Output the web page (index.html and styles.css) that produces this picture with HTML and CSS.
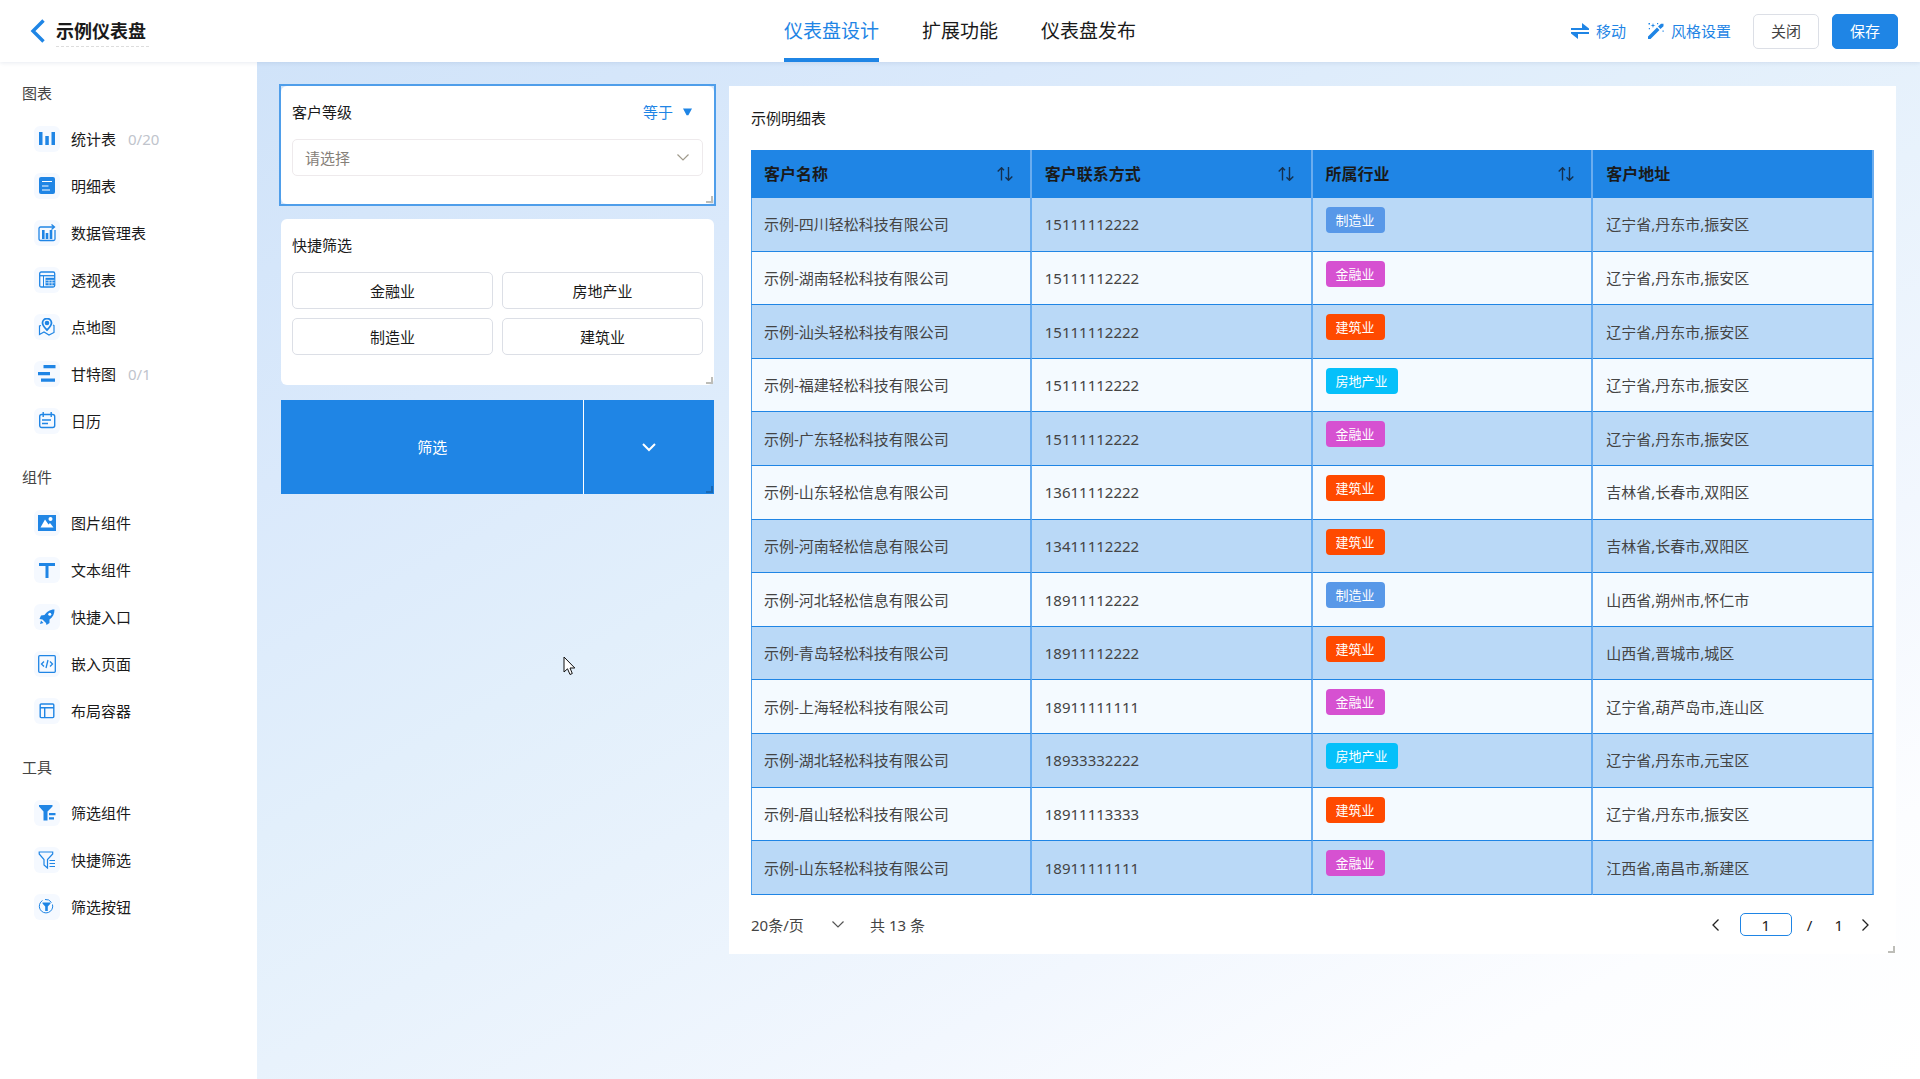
FILE: index.html
```html
<!DOCTYPE html>
<html lang="zh-CN">
<head>
<meta charset="utf-8">
<title>示例仪表盘</title>
<link rel="stylesheet" href="styles.css">
</head>
<body>
<header class="topbar">
  <div class="brand">
    <button class="icon-button" type="button" aria-label="返回">
      <svg width="16" height="24" viewBox="0 0 16 24" fill="none" stroke="#1f85e5" stroke-width="3.4"><path d="M13.5 1.5 3 12l10.500 10.500"/></svg>
    </button>
    <h1 class="brand-title">示例仪表盘</h1>
  </div>
  <nav class="tabs">
    <a class="tab tab-active" href="#design">仪表盘设计</a>
    <a class="tab" href="#extend">扩展功能</a>
    <a class="tab" href="#publish">仪表盘发布</a>
  </nav>
  <div class="actions">
    <button class="text-button" type="button">
      <svg width="18" height="16" viewBox="0 0 18 16" fill="#1f85e5"><path d="M0 5h11V0l7 5.500V7H0zM18 11H7v5L0 10.500V9h18z"/></svg>
      移动
    </button>
    <button class="text-button" type="button">
      <svg width="16" height="16" viewBox="0 0 16 16" fill="#1f85e5"><path d="M0 13.500 9 4.500l2.500 2.500-9 9H0zM10 3.500 13 .8h2.500v2.500L12.500 6zM5 0l.6 1.900L7.500 2.500l-1.900.6L5 5l-.6-1.900L2.500 2.500l1.900-.6zM.5 0h1.500v1.500H.5zM9 0h1.200v1.200H9zM.8 5H2v1.200H.8zM14.500 7.500h1.200v1.200h-1.200z"/></svg>
      风格设置
    </button>
    <button class="button" type="button">关闭</button>
    <button class="button button-primary" type="button">保存</button>
  </div>
</header>
<div class="workspace">
  <aside class="sidebar">
    <section class="group">
      <h2 class="group-title">图表</h2>
      <ul class="group-list">
        <li class="tool"><span class="tool-icon"><svg width="18" height="18" viewBox="0 0 18 18" fill="#1f85e5"><path d="M1 2h3.500v13H1zM7.300 6h3.500v9H7.300zM13.500 2H17v13h-3.500z"/></svg></span>统计表<span class="quota">0/20</span></li>
        <li class="tool"><span class="tool-icon"><svg width="18" height="18" viewBox="0 0 18 18"><rect x="1" y="0" width="16" height="17" rx="2" fill="#1f85e5"/><path d="M4 4.500h10M4 9h6.500M4 13h8" stroke="#fff" stroke-width="1.200"/></svg></span>明细表</li>
        <li class="tool"><span class="tool-icon"><svg width="18" height="18" viewBox="0 0 18 18" fill="none" stroke="#1f85e5"><path d="M17 6v9a1.500 1.500 0 0 1-1.500 1.500h-13A1.500 1.500 0 0 1 1 15V4.500A1.500 1.500 0 0 1 2.500 3H16M13.500.5 16.500 3l-3 2.500" stroke-width="1.300"/><path d="M5.300 6v9M9 9v6M13 6v9" stroke-width="2.600"/></svg></span>数据管理表</li>
        <li class="tool"><span class="tool-icon"><svg width="18" height="18" viewBox="0 0 18 18" fill="none" stroke="#1f85e5"><rect x="1.700" y="1" width="15" height="15" rx="1.500" stroke-width="1.300"/><path d="M2 4.700h14.500" stroke-width="1.300"/><path d="M5.500 5v11"/><rect x="7.500" y="6.800" width="9" height="7.500" fill="#1f85e5" stroke="none"/><path d="M7.500 9.300h9M7.500 11.800h9M11 9v5.500M14 9v5.500" stroke="#f5f9ff" stroke-width=".7"/></svg></span>透视表</li>
        <li class="tool"><span class="tool-icon"><svg width="18" height="18" viewBox="0 0 18 18" fill="none" stroke="#1f85e5"><path d="M9 12C6 9 4.500 7.300 4.500 5a4.500 4.500 0 0 1 9 0C13.500 7.300 12 9 9 12z" stroke-width="1.800"/><circle cx="9" cy="5" r="2.300" fill="#1f85e5" stroke="none"/><path d="M3 7.500 1.500 8v8.500L6 14l5 3 5-2.500V7.500l-1-.5" stroke-width="1.200"/></svg></span>点地图</li>
        <li class="tool"><span class="tool-icon"><svg width="18" height="18" viewBox="0 0 18 18" fill="#1f85e5"><path d="M5.500 0h12v3.200h-12zM0 7h12v3.200H0zM3 13.500h14v3.200H3z"/></svg></span>甘特图<span class="quota">0/1</span></li>
        <li class="tool"><span class="tool-icon"><svg width="18" height="18" viewBox="0 0 18 18" fill="none" stroke="#1f85e5" stroke-width="1.400"><rect x="1.700" y="2.500" width="15" height="13" rx="2"/><path d="M5.200 0v5M13.200 0v5M4 8h9M4 11.500h6"/></svg></span>日历</li>
      </ul>
    </section>
    <section class="group">
      <h2 class="group-title">组件</h2>
      <ul class="group-list">
        <li class="tool"><span class="tool-icon"><svg width="18" height="18" viewBox="0 0 18 18"><path d="M0 1h18v16H0z" fill="#1f85e5"/><path d="m2.500 13.500 4.500-8 3.500 5L12 9l3.500 4.500z" fill="#fff"/><circle cx="12.500" cy="5" r="2" fill="#fff"/></svg></span>图片组件</li>
        <li class="tool"><span class="tool-icon"><svg width="18" height="18" viewBox="0 0 18 18" fill="#1f85e5"><path d="M1 2h16v3h-6.500v12h-3V5H1z"/></svg></span>文本组件</li>
        <li class="tool"><span class="tool-icon"><svg width="18" height="18" viewBox="0 0 18 18"><path d="M16.500 1.500C11.500 1.500 8.500 4 6.500 7L3 7.500 1.500 11l3 .5L8 15l.5 2 3-2v-3.500c3.500-2.500 5-5.500 5-10zM3 12.500l2.500 2.500L2 16z" fill="#1f85e5"/><circle cx="11.800" cy="6.200" r="1.500" fill="#fff"/></svg></span>快捷入口</li>
        <li class="tool"><span class="tool-icon"><svg width="18" height="18" viewBox="0 0 18 18" fill="none" stroke="#1f85e5" stroke-width="1.300"><rect x=".7" y=".7" width="16.600" height="16.600" rx="1"/><path d="M6 6.500 3.500 9 6 11.500M12 6.500 14.500 9 12 11.500M10 5 8 13"/></svg></span>嵌入页面</li>
        <li class="tool"><span class="tool-icon"><svg width="18" height="18" viewBox="0 0 18 18" fill="none" stroke="#1f85e5" stroke-width="1.400"><rect x="2.200" y="2" width="13.600" height="13.600" rx="1"/><path d="M2 5.700h14M6.700 5.700v10"/></svg></span>布局容器</li>
      </ul>
    </section>
    <section class="group">
      <h2 class="group-title">工具</h2>
      <ul class="group-list">
        <li class="tool"><span class="tool-icon"><svg width="18" height="18" viewBox="0 0 18 18" fill="#1f85e5"><path d="M1 1h13.500v1.500L9.500 7.500v9h-4v-9L1 2.500zM11 9h6.500v2.200H11zM11 13.300h5v2.200h-5z"/></svg></span>筛选组件</li>
        <li class="tool"><span class="tool-icon"><svg width="18" height="18" viewBox="0 0 18 18" fill="none" stroke="#1f85e5" stroke-width="1.200"><path d="M9.500 17 6 14V8.500L1.200 3V1h13.500v2L9.500 8.500z"/><path d="M11.500 9.500h5.500M11.500 12.500h5.500M11.500 15.500h5.500"/></svg></span>快捷筛选</li>
        <li class="tool"><span class="tool-icon"><svg width="18" height="18" viewBox="0 0 18 18" fill="none" stroke="#1f85e5"><path d="M4.500 2.500a6.700 6.700 0 1 0 10 4M7 1.500a6.700 6.700 0 0 1 6.500 3" stroke-width="1"/><path d="M4.500 4.500h8v1L9.800 8.500V13H7.200V8.500L4.500 5.500z" fill="#1f85e5" stroke="none"/></svg></span>筛选按钮</li>
      </ul>
    </section>
  </aside>
  <main class="canvas">
    <div class="column">
      <section class="card card-selected">
        <div class="card-head">
          <label class="card-title" for="level">客户等级</label>
          <span class="operator">
            <select class="operator-select" aria-label="条件"><option>等于</option></select>
            <svg width="9" height="8" viewBox="0 0 10 8" fill="#1f85e5"><path d="M0 0h10L6 7.500H4z"/></svg>
          </span>
        </div>
        <div class="field">
          <select class="field-select" id="level"><option>请选择</option></select>
          <svg width="12" height="7" viewBox="0 0 12 7" fill="none" stroke="#a09a8c" stroke-width="1.200"><path d="m.5.5 5.500 5.500L11.500.5"/></svg>
        </div>
        <span class="resize"></span>
      </section>
      <section class="card">
        <h2 class="card-title">快捷筛选</h2>
        <div class="choices">
          <button class="choice" type="button">金融业</button>
          <button class="choice" type="button">房地产业</button>
          <button class="choice" type="button">制造业</button>
          <button class="choice" type="button">建筑业</button>
        </div>
        <span class="resize"></span>
      </section>
      <div class="split">
        <button class="split-main" type="button">筛选</button>
        <button class="split-more" type="button" aria-label="更多">
          <svg width="14" height="9" viewBox="0 0 14 9" fill="none" stroke="#fff" stroke-width="2"><path d="m1 1 6 6 6-6"/></svg>
        </button>
        <span class="resize resize-dark"></span>
      </div>
    </div>
    <section class="panel">
      <h2 class="card-title">示例明细表</h2>
      <table class="data">
        <thead>
          <tr>
            <th><div class="th">客户名称<svg width="16" height="14" viewBox="0 0 16 14" fill="none" stroke="#15304d" stroke-width="1.400"><path d="M.7 4.500 4.500.8v12.700M4.500.8l2.500 2.500M11.500 0v13M8.500 10.300l3 3 3.800-3.800"/></svg></div></th>
            <th><div class="th">客户联系方式<svg width="16" height="14" viewBox="0 0 16 14" fill="none" stroke="#15304d" stroke-width="1.400"><path d="M.7 4.500 4.500.8v12.700M4.500.8l2.500 2.500M11.500 0v13M8.500 10.300l3 3 3.800-3.800"/></svg></div></th>
            <th><div class="th">所属行业<svg width="16" height="14" viewBox="0 0 16 14" fill="none" stroke="#15304d" stroke-width="1.400"><path d="M.7 4.500 4.500.8v12.700M4.500.8l2.500 2.500M11.500 0v13M8.500 10.300l3 3 3.800-3.800"/></svg></div></th>
            <th><div class="th">客户地址</div></th>
          </tr>
        </thead>
        <tbody>
          <tr><td>示例-四川轻松科技有限公司</td><td>15111112222</td><td class="tag-cell"><span class="tag tag-make">制造业</span></td><td>辽宁省,丹东市,振安区</td></tr>
          <tr><td>示例-湖南轻松科技有限公司</td><td>15111112222</td><td class="tag-cell"><span class="tag tag-finance">金融业</span></td><td>辽宁省,丹东市,振安区</td></tr>
          <tr><td>示例-汕头轻松科技有限公司</td><td>15111112222</td><td class="tag-cell"><span class="tag tag-build">建筑业</span></td><td>辽宁省,丹东市,振安区</td></tr>
          <tr><td>示例-福建轻松科技有限公司</td><td>15111112222</td><td class="tag-cell"><span class="tag tag-estate">房地产业</span></td><td>辽宁省,丹东市,振安区</td></tr>
          <tr><td>示例-广东轻松科技有限公司</td><td>15111112222</td><td class="tag-cell"><span class="tag tag-finance">金融业</span></td><td>辽宁省,丹东市,振安区</td></tr>
          <tr><td>示例-山东轻松信息有限公司</td><td>13611112222</td><td class="tag-cell"><span class="tag tag-build">建筑业</span></td><td>吉林省,长春市,双阳区</td></tr>
          <tr><td>示例-河南轻松信息有限公司</td><td>13411112222</td><td class="tag-cell"><span class="tag tag-build">建筑业</span></td><td>吉林省,长春市,双阳区</td></tr>
          <tr><td>示例-河北轻松信息有限公司</td><td>18911112222</td><td class="tag-cell"><span class="tag tag-make">制造业</span></td><td>山西省,朔州市,怀仁市</td></tr>
          <tr><td>示例-青岛轻松科技有限公司</td><td>18911112222</td><td class="tag-cell"><span class="tag tag-build">建筑业</span></td><td>山西省,晋城市,城区</td></tr>
          <tr><td>示例-上海轻松科技有限公司</td><td>18911111111</td><td class="tag-cell"><span class="tag tag-finance">金融业</span></td><td>辽宁省,葫芦岛市,连山区</td></tr>
          <tr><td>示例-湖北轻松科技有限公司</td><td>18933332222</td><td class="tag-cell"><span class="tag tag-estate">房地产业</span></td><td>辽宁省,丹东市,元宝区</td></tr>
          <tr><td>示例-眉山轻松科技有限公司</td><td>18911113333</td><td class="tag-cell"><span class="tag tag-build">建筑业</span></td><td>辽宁省,丹东市,振安区</td></tr>
          <tr><td>示例-山东轻松科技有限公司</td><td>18911111111</td><td class="tag-cell"><span class="tag tag-finance">金融业</span></td><td>江西省,南昌市,新建区</td></tr>
        </tbody>
      </table>
      <footer class="pager">
        <span class="page-size">
          <select class="page-size-select" aria-label="每页条数"><option>20条/页</option></select>
          <svg width="12" height="7" viewBox="0 0 12 7" fill="none" stroke="#555" stroke-width="1.200"><path d="m.5.5 5.500 5.500L11.500.5"/></svg>
        </span>
        <span class="total">共 13 条</span>
        <button class="icon-button" type="button" aria-label="上一页"><svg width="7" height="12" viewBox="0 0 7 12" fill="none" stroke="#222" stroke-width="1.300"><path d="M6.500.5 1 6l5.500 5.500"/></svg></button>
        <input class="page-input" type="text" value="1" aria-label="页码">
        <span class="page-total"><span>/</span><span>1</span></span>
        <button class="icon-button" type="button" aria-label="下一页"><svg width="7" height="12" viewBox="0 0 7 12" fill="none" stroke="#222" stroke-width="1.300"><path d="M.5.5 6 6 .5 11.500"/></svg></button>
      </footer>
      <span class="resize"></span>
    </section>
    <svg class="pointer" width="13" height="20" viewBox="0 0 13 20"><path d="M1 1v15l3.500-3.200L7 18.500l2.300-1L7 12h4.800z" fill="#fff" stroke="#111"/></svg>
  </main>
</div>
</body>
</html>
```
FILE: styles.css
```css
:root {
  --blue: #1f85e5;
  --ink: #1a1a1a;
  --text: #444;
  --font: "Noto Sans", "Noto Sans CJK SC", sans-serif;
}

* { box-sizing: border-box; }

body {
  display: flex;
  flex-direction: column;
  min-height: 100vh;
  margin: 0;
  background: #fff;
  color: var(--ink);
  font: 15px/22px var(--font);
}

button, select, input {
  margin: 0;
  padding: 0;
  border: 0;
  background: none;
  color: inherit;
  font: inherit;
}

select { appearance: none; }
svg { display: block; flex: none; }
h1, h2, ul { margin: 0; padding: 0; }
ul { list-style: none; }

.topbar {
  position: relative;
  z-index: 1;
  display: grid;
  grid-template-columns: 1fr auto 1fr;
  align-items: center;
  height: 62px;
  padding: 0 22px;
  background: #fff;
  box-shadow: 0 1px 4px rgba(30, 60, 120, 0.1);
}

.brand { display: flex; align-items: center; gap: 10px; padding-left: 8px; }
.brand-title {
  padding-right: 3px;
  border-bottom: 1px dashed #ddd;
  font-size: 18px;
  line-height: 30px;
}

.tabs { display: flex; gap: 43px; height: 62px; }
.tab {
  padding-top: 5px;
  border-bottom: 4px solid transparent;
  color: var(--ink);
  font-size: 19px;
  line-height: 53px;
  text-decoration: none;
}
.tab-active { border-color: var(--blue); color: var(--blue); }

.actions { display: flex; align-items: center; justify-content: flex-end; }
.text-button {
  display: flex;
  align-items: center;
  gap: 7px;
  margin-right: 22px;
  color: var(--blue);
}
.button {
  width: 66px;
  height: 35px;
  border: 1px solid #dcdfe6;
  border-radius: 5px;
  color: var(--text);
}
.button-primary {
  margin-left: 13px;
  border-color: var(--blue);
  background: var(--blue);
  color: #fff;
}

.workspace { display: flex; flex: 1; }

.sidebar {
  flex: none;
  width: 257px;
  padding-top: 20px;
}
.group { margin-bottom: 22px; }
.group-title {
  margin: 0 22px 11px;
  color: var(--text);
  font-size: 15px;
  font-weight: 400;
}
.tool {
  display: flex;
  align-items: center;
  height: 47px;
  padding-left: 34px;
}
.tool-icon {
  display: grid;
  place-items: center;
  width: 26px;
  height: 26px;
  margin-right: 11px;
  border-radius: 6px;
  background: #f5f9ff;
}
.quota { margin-left: 12px; color: #c0c4cc; }

.canvas {
  position: relative;
  flex: 1;
  display: grid;
  grid-template-columns: 433fr 1167fr;
  gap: 15px;
  align-items: start;
  padding: 24px;
  background: linear-gradient(151deg, #d0e3f9 0%, #dae9fb 22%, #e2effb 40%, #e8f2fc 52%, #f2f7fe 70%, #fcfdff 86%, #fff 100%);
}

.column { display: grid; gap: 15px; }
.card {
  position: relative;
  padding: 15px 11px 30px;
  border-radius: 6px;
  background: #fff;
}
.card-selected { padding-bottom: 28px; }
.card-selected::before {
  content: "";
  position: absolute;
  inset: -2px;
  border: 2px solid #4f9eea;
  pointer-events: none;
}
.card-head { display: flex; justify-content: space-between; padding-right: 11px; }
.card-title { font-size: 15px; font-weight: 400; }

.operator { display: flex; align-items: center; gap: 9px; color: var(--blue); }
.operator-select { line-height: 22px; }

.field {
  display: grid;
  align-items: center;
  margin-top: 16px;
}
.field > * { grid-area: 1 / 1; }
.field > svg { justify-self: end; margin-right: 14px; pointer-events: none; }
.field-select {
  width: 100%;
  height: 37px;
  padding: 0 12px;
  border: 1px solid #eeeaec;
  border-radius: 5px;
  color: #858078;
}

.choices {
  display: grid;
  grid-template-columns: 1fr 1fr;
  gap: 9px;
  margin-top: 16px;
}
.choice {
  height: 37px;
  border: 1px solid #dcdfe6;
  border-radius: 5px;
}

.split { position: relative; display: flex; gap: 1px; height: 94px; background: #fff; }
.split button { background: var(--blue); color: #fff; }
.split-main { flex: 7; }
.split-more { display: grid; flex: 3; place-items: center; }

.resize {
  position: absolute;
  right: 1px;
  bottom: 1px;
  width: 7px;
  height: 7px;
  border: solid #bdbdb8;
  border-width: 0 2px 2px 0;
}
.resize-dark { border-color: #1968b4; }

.panel {
  position: relative;
  padding: 21px 22px 18px;
  background: #fff;
}

.data {
  width: 100%;
  height: 745px;
  margin-top: 21px;
  border-collapse: separate;
  border-spacing: 0;
  table-layout: fixed;
  color: var(--text);
}
.data th {
  height: 48px;
  padding: 0 17px 0 13px;
  border-right: 2px solid #6badef;
  background: var(--blue);
  color: var(--ink);
  font-size: 16px;
  text-align: left;
}
.th { display: flex; align-items: center; justify-content: space-between; }
.data td {
  padding: 0 13px;
  border-right: 2px solid #6badef;
  border-bottom: 1px solid var(--blue);
}
.data td:first-child { padding-left: 12px; border-left: 1px solid #4f9eea; }
.data tbody tr:nth-child(odd) { background: #bad9f7; }
.data tbody tr:nth-child(even) { background: #f4faff; }
.data .tag-cell { padding-top: 9px; vertical-align: top; }

.tag {
  display: block;
  width: fit-content;
  padding: 0 10px;
  border-radius: 4px;
  color: #fff;
  font-size: 13px;
  line-height: 26px;
}
.tag-make { background: #5898e8; }
.tag-finance { background: #d651d1; }
.tag-build { background: #ff4a00; }
.tag-estate { background: #05c0fa; }

.pager {
  display: flex;
  align-items: center;
  height: 23px;
  margin-top: 18px;
  padding-right: 5px;
  color: var(--text);
}
.page-size { display: grid; align-items: center; width: 93px; }
.page-size > * { grid-area: 1 / 1; }
.page-size > svg { justify-self: end; pointer-events: none; }
.page-size-select { width: 100%; }
.total { margin-left: 26px; margin-right: auto; }
.page-input {
  width: 52px;
  height: 23px;
  margin: 0 15px 0 21px;
  border: 1px solid var(--blue);
  border-radius: 5px;
  color: var(--ink);
  text-align: center;
}
.page-total { display: flex; gap: 22px; margin-right: 19px; color: var(--ink); }
.icon-button { display: grid; place-items: center; }

.pointer { position: absolute; left: 306px; top: 594px; }
```
